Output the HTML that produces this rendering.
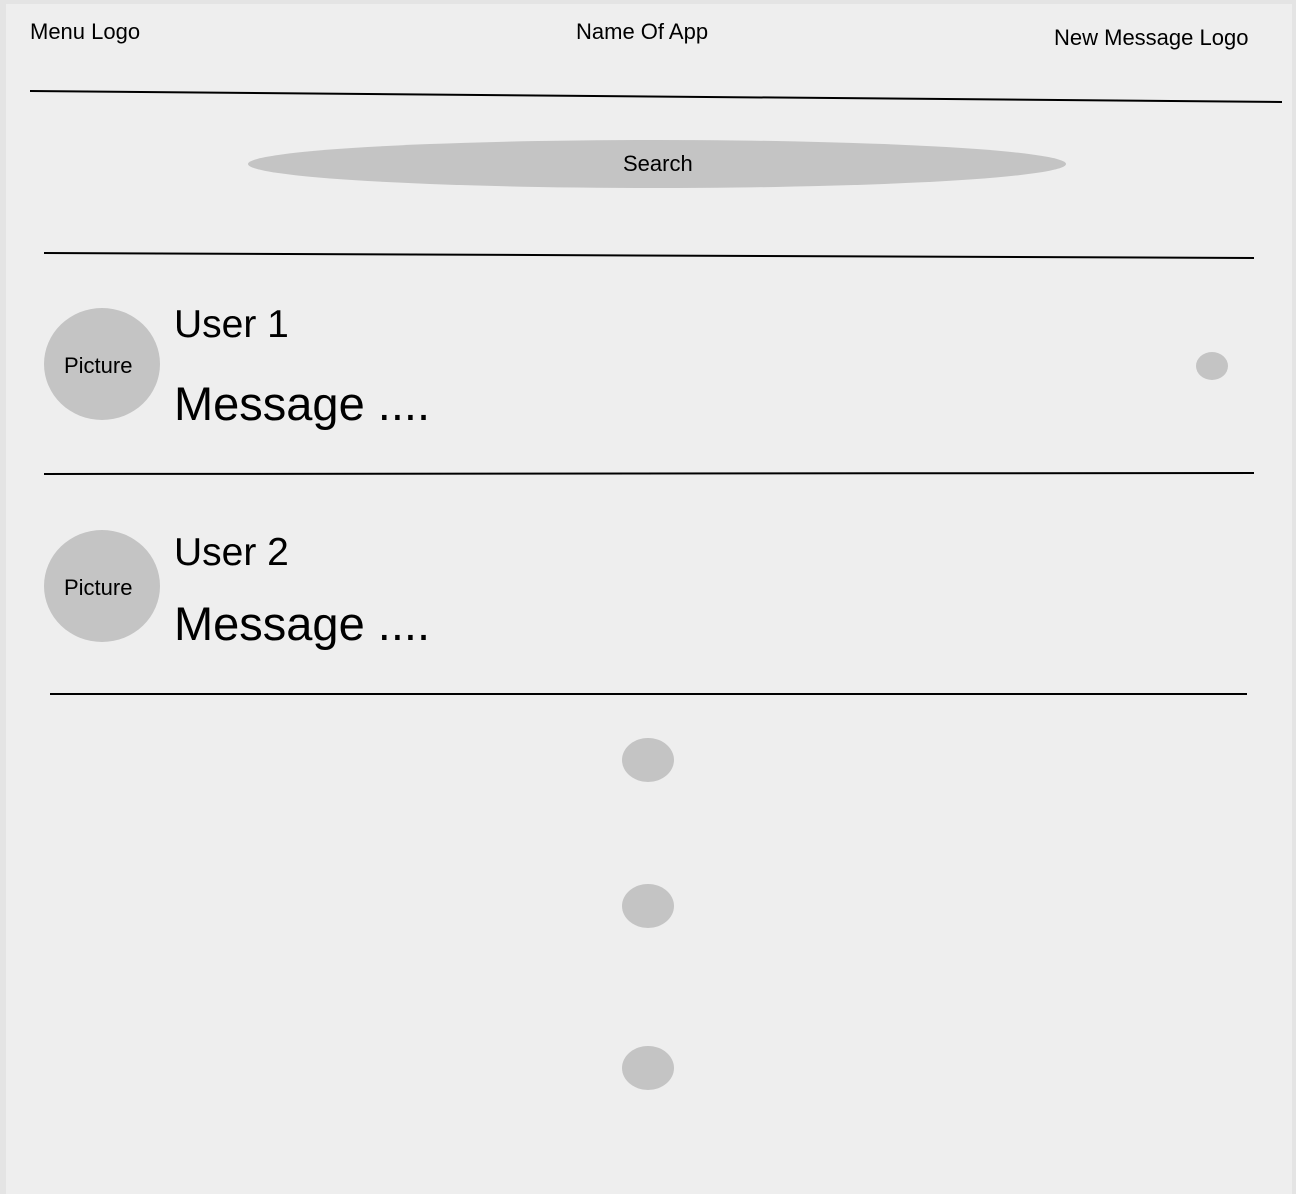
<!DOCTYPE html>
<html><head><meta charset="utf-8"><style>
html,body{margin:0;padding:0;}
body{width:1296px;height:1194px;background:#e4e4e4;position:relative;overflow:hidden;font-family:"Liberation Sans",sans-serif;color:#000;}
.panel{position:absolute;left:6px;top:4px;width:1286px;height:1190px;background:#eeeeee;}
.t{position:absolute;white-space:nowrap;}
.e{position:absolute;background:#c4c4c4;border-radius:50%;}
svg{position:absolute;left:0;top:0;}
</style></head><body>
<div class="panel"></div>
<svg width="1296" height="1194">
<line x1="30" y1="91" x2="1282" y2="102" stroke="#000" stroke-width="2"/>
<line x1="44" y1="253" x2="1254" y2="258" stroke="#000" stroke-width="2"/>
<line x1="44" y1="474" x2="1254" y2="473" stroke="#000" stroke-width="2"/>
<line x1="50" y1="694" x2="1247" y2="694" stroke="#000" stroke-width="2"/>
</svg>
<div class="t" style="left:30px;top:19px;font-size:22px;">Menu Logo</div>
<div class="t" style="left:576px;top:19px;font-size:22px;">Name Of App</div>
<div class="t" style="left:1054px;top:25px;font-size:22px;">New Message Logo</div>
<div class="e" style="left:248px;top:140px;width:818px;height:48px;"></div>
<div class="t" style="left:623px;top:151px;font-size:22px;">Search</div>
<div class="e" style="left:44px;top:308px;width:116px;height:112px;"></div>
<div class="t" style="left:64px;top:353px;font-size:22px;">Picture</div>
<div class="t" style="left:174px;top:303px;font-size:39px;">User 1</div>
<div class="t" style="left:174px;top:376px;font-size:47px;">Message ....</div>
<div class="e" style="left:1196px;top:352px;width:32px;height:28px;"></div>
<div class="e" style="left:44px;top:530px;width:116px;height:112px;"></div>
<div class="t" style="left:64px;top:575px;font-size:22px;">Picture</div>
<div class="t" style="left:174px;top:531px;font-size:39px;">User 2</div>
<div class="t" style="left:174px;top:596px;font-size:47px;">Message ....</div>
<div class="e" style="left:622px;top:738px;width:52px;height:44px;"></div>
<div class="e" style="left:622px;top:884px;width:52px;height:44px;"></div>
<div class="e" style="left:622px;top:1046px;width:52px;height:44px;"></div>
</body></html>
